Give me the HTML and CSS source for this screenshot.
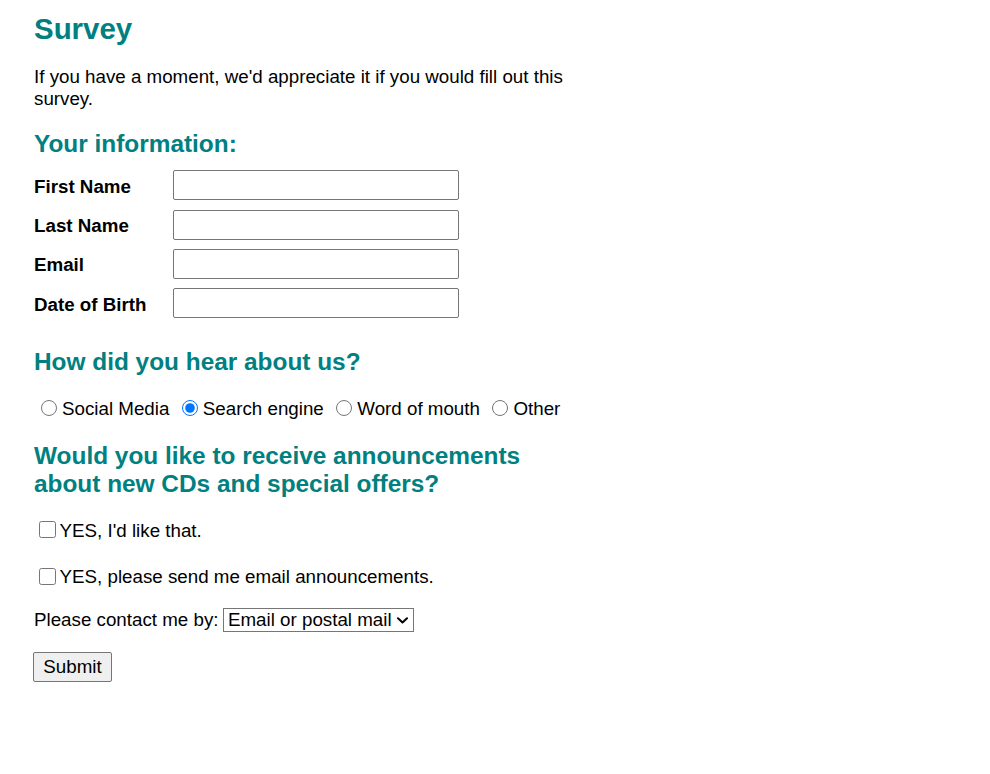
FILE: index.html
```html
<!DOCTYPE html>
<html lang="en">
<head>
<meta charset="utf-8">
<title>Survey</title>
<link rel="stylesheet" href="styles.css">
</head>
<body>
<main class="survey">
  <h1 class="title">Survey</h1>
  <p class="intro">If you have a moment, we'd appreciate it if you would fill out this survey.</p>
  <form class="form" action="#">
    <h2 class="section section-info">Your information:</h2>
    <div class="field">
      <label class="field-label" for="first_name">First Name</label>
      <input class="field-input" type="text" id="first_name">
    </div>
    <div class="field">
      <label class="field-label" for="last_name">Last Name</label>
      <input class="field-input" type="text" id="last_name">
    </div>
    <div class="field">
      <label class="field-label" for="email">Email</label>
      <input class="field-input" type="text" id="email">
    </div>
    <div class="field">
      <label class="field-label" for="dob">Date of Birth</label>
      <input class="field-input" type="text" id="dob">
    </div>

    <h2 class="section section-hear">How did you hear about us?</h2>
    <div class="options">
      <label class="option"><input class="radio" type="radio" name="heard_from" value="social">Social Media</label>
      <label class="option"><input class="radio" type="radio" name="heard_from" value="search" checked>Search engine</label>
      <label class="option"><input class="radio" type="radio" name="heard_from" value="word">Word of mouth</label>
      <label class="option"><input class="radio" type="radio" name="heard_from" value="other">Other</label>
    </div>

    <h2 class="section section-offers">Would you like to receive announcements about new CDs and special offers?</h2>
    <div class="check-row check-first">
      <input class="check" type="checkbox" id="offers"><label for="offers">YES, I'd like that.</label>
    </div>
    <div class="check-row check-second">
      <input class="check" type="checkbox" id="emails"><label for="emails">YES, please send me email announcements.</label>
    </div>
    <div class="contact">
      <label class="contact-label" for="contact_via">Please contact me by:</label>
      <span class="select-wrap">
        <select class="contact-select" id="contact_via">
          <option>Email or postal mail</option>
          <option>Email only</option>
          <option>Postal mail only</option>
        </select>
        <svg class="select-arrow" width="11" height="7" viewBox="0 0 11 7" aria-hidden="true"><path d="M1 1.2 L5.5 5.4 L10 1.2" fill="none" stroke="#000" stroke-width="2" stroke-linecap="round" stroke-linejoin="round"/></svg>
      </span>
    </div>
    <div class="actions">
      <button class="submit" type="submit">Submit</button>
    </div>
  </form>
</main>
</body>
</html>
```
FILE: styles.css
```css
html, body {
  background: #ffffff;
}

body {
  margin: 0;
  padding: 0 0 0 34px;
  font-family: "Liberation Sans", Arial, sans-serif;
  font-size: 18.75px;
  line-height: 22px;
  color: #000000;
}

.survey {
  width: 545px;
  display: flow-root;
}

.title {
  margin: 12.4px 0 0;
  font-size: 29.44px;
  line-height: 34px;
  font-weight: bold;
  color: #008080;
}

.intro {
  margin: 20.1px 0 0;
}

.form {
  margin: 0;
}

.section {
  margin: 0;
  font-size: 24.4px;
  line-height: 28px;
  font-weight: bold;
  color: #008080;
}

.section-info {
  margin-top: 19.4px;
  margin-bottom: 12.4px;
}

.field {
  display: flex;
  align-items: center;
  height: 30px;
  margin-bottom: 9.33px;
}

.field-label {
  width: 139px;
  padding-top: 3px;
  font-weight: bold;
}

.field-input {
  box-sizing: border-box;
  width: 286px;
  height: 30px;
  margin: 0;
  padding: 1px 4px;
  border: 1px solid #767676;
  border-radius: 2px;
  font-family: inherit;
  font-size: 16px;
}

.section-hear {
  margin-top: 30px;
}

.options {
  display: flex;
  align-items: center;
  margin-top: 21.9px;
  height: 22px;
}

.option {
  display: inline-flex;
  align-items: center;
  margin-right: 5.5px;
}

.radio {
  width: 16px;
  height: 16px;
  margin: 0 5px 3px 7px;
}

.section-offers {
  margin-top: 22.25px;
}

.check-row {
  display: flex;
  align-items: baseline;
}

.check-first {
  margin-top: 21.25px;
}

.check-second {
  margin-top: 24.55px;
}

.check {
  width: 16.6px;
  height: 16.6px;
  margin: 0 4px 0 5px;
  align-self: flex-end;
  position: relative;
  top: -3.6px;
}

.contact {
  display: flex;
  align-items: center;
  margin-top: 19.5px;
  height: 24px;
}

.contact-label {
  margin-right: 4.5px;
}

.select-wrap {
  position: relative;
  display: inline-block;
  height: 24px;
}

.contact-select {
  box-sizing: border-box;
  -webkit-appearance: none;
  appearance: none;
  width: 191px;
  height: 24px;
  margin: 0;
  padding: 0 0 0 4px;
  border: 1px solid #767676;
  border-radius: 0;
  background: #ffffff;
  font-family: inherit;
  font-size: 18.75px;
  color: #000000;
}

.select-arrow {
  position: absolute;
  right: 6px;
  top: 9px;
  pointer-events: none;
}

.actions {
  margin-top: 20px;
}

.submit {
  box-sizing: border-box;
  height: 30px;
  margin: 0 0 0 -0.7px;
  padding: 0 9px;
  border: 1px solid #767676;
  border-radius: 2px;
  background: #efefef;
  font-family: inherit;
  font-size: 18.75px;
  color: #000000;
}
```
